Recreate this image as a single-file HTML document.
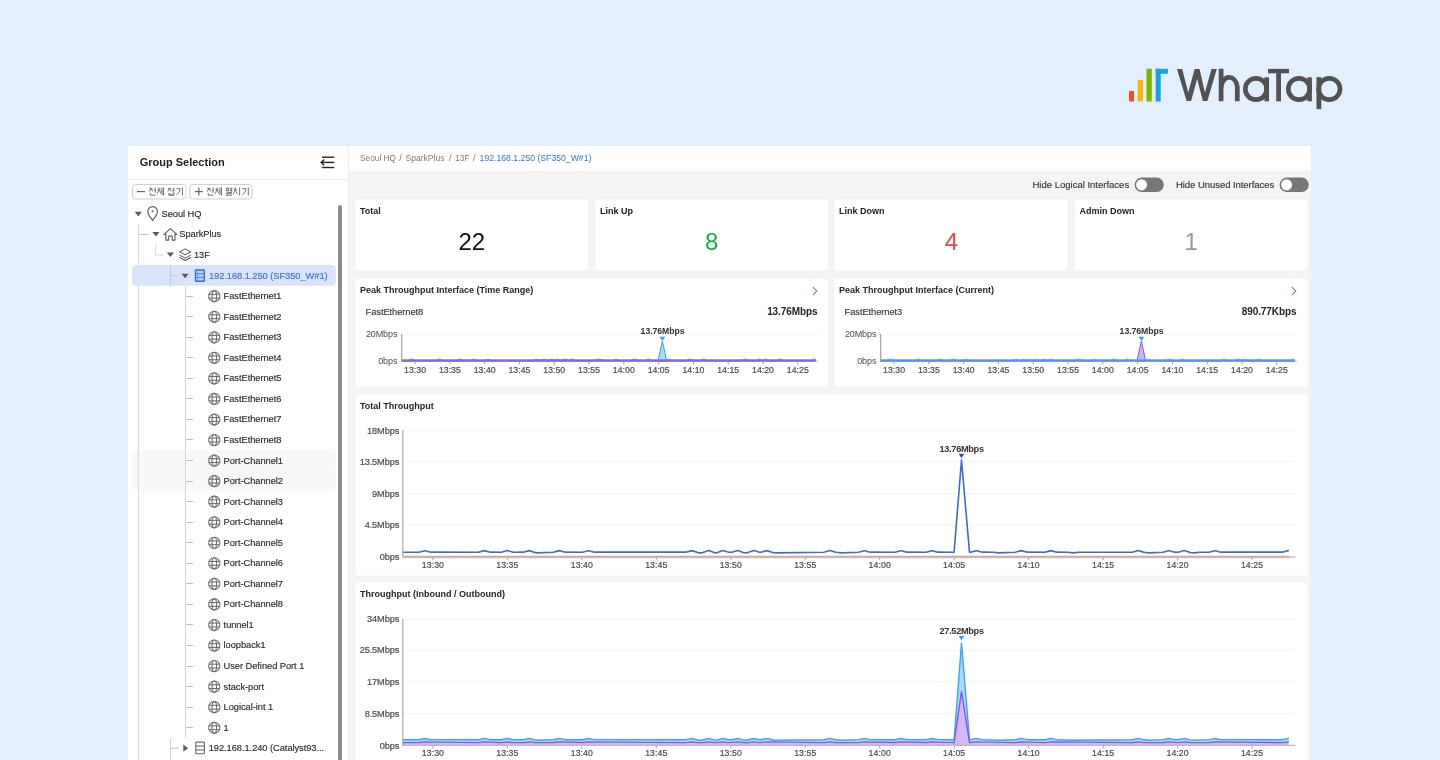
<!DOCTYPE html>
<html><head><meta charset="utf-8"><title>WhaTap NMS</title>
<style>
html,body{margin:0;padding:0;background:#e3effd;width:1440px;height:760px;overflow:hidden}
svg{display:block;will-change:transform}
text{font-family:'Liberation Sans', sans-serif}
</style></head><body>
<svg width="1440" height="760" viewBox="0 0 1440 760">
<rect width="1440" height="760" fill="#e3effd"/>
<g>
<rect x="1129" y="91" width="5" height="10.5" fill="#f04e23" rx="0"/>
<rect x="1137.7" y="80" width="5.2" height="21.5" fill="#ffb400" rx="0"/>
<rect x="1146.5" y="68.8" width="5.3" height="32.7" fill="#7ab800" rx="0"/>
<rect x="1155.7" y="68.8" width="5" height="32.7" fill="#1ba1e2" rx="0"/>
<rect x="1155.7" y="68.8" width="12.2" height="5" fill="#1ba1e2" rx="0"/>
<path d="M1177 68.9 L1186.6 100.9 L1191.1 100.9 L1197.15 78.9 L1202.9 100.9 L1207.4 100.9 L1216.8 68.9 L1211.5 68.9 L1204.9 92.4 L1199.6 68.9 L1194.7 68.9 L1188.2 92.4 L1182.2 68.9 Z" fill="#525252"/>
<path d="M1221.1 68.8 V101.3 M1221.1 89 A 8.1 10.7 0 0 1 1237.3 87 V101.3" fill="none" stroke="#525252" stroke-width="4.7"/>
<circle cx="1256" cy="89" r="10.7" fill="none" stroke="#525252" stroke-width="4.7"/>
<rect x="1264.4" y="77.3" width="4.6" height="24" fill="#525252" rx="0"/>
<rect x="1268" y="68.9" width="21" height="4.4" fill="#525252" rx="0"/>
<rect x="1276.2" y="68.9" width="4.8" height="32.4" fill="#525252" rx="0"/>
<circle cx="1299" cy="89" r="10.7" fill="none" stroke="#525252" stroke-width="4.7"/>
<rect x="1307.3" y="77.3" width="4.6" height="24" fill="#525252" rx="0"/>
<rect x="1316.5" y="77.1" width="4.8" height="32" fill="#525252" rx="0"/>
<circle cx="1329.3" cy="89" r="10.7" fill="none" stroke="#525252" stroke-width="4.7"/>
</g>
<rect x="128" y="146" width="220" height="614" fill="#ffffff" rx="0"/>
<line x1="128" y1="179.5" x2="348" y2="179.5" stroke="#efefef" stroke-width="1"/>
<line x1="348.5" y1="146" x2="348.5" y2="760" stroke="#ededed" stroke-width="1"/>
<text x="139.7" y="166" font-size="11" fill="#222" font-weight="700" text-anchor="start">Group Selection</text>
<g stroke="#222" stroke-width="1.4" fill="none"><line x1="322" y1="157.2" x2="334.2" y2="157.2"/><line x1="321" y1="162.4" x2="334.2" y2="162.4"/><line x1="322" y1="167.5" x2="334.2" y2="167.5"/><polyline points="324.2,159.6 321.2,162.4 324.2,165.2"/></g>
<rect x="132.5" y="184.5" width="53.5" height="14.5" rx="3" fill="#fff" stroke="#cfcfcf" stroke-width="1"/>
<rect x="189.5" y="184.5" width="62.5" height="14.5" rx="3" fill="#fff" stroke="#cfcfcf" stroke-width="1"/>
<line x1="137" y1="191.6" x2="145" y2="191.6" stroke="#666" stroke-width="1.2"/>
<line x1="194.8" y1="191.6" x2="202.9" y2="191.6" stroke="#666" stroke-width="1.2"/>
<line x1="198.85" y1="187.6" x2="198.85" y2="195.6" stroke="#666" stroke-width="1.2"/>
<path transform="translate(149.2,187.4)" d="M0.2 1 H3.4 M1.8 1 L0.1 4.3 M1.8 1 L3.6 4.1 M6.1 0 V5.4 M4.4 2.7 H6.1 M1.1 5.6 V7.8 H6.4" fill="none" stroke="#6e6e6e" stroke-width="0.95"/>
<path transform="translate(157.2,187.4)" d="M1.9 0 V1 M0.2 1.7 H3.5 M1.9 1.7 L0 6.4 M1.9 1.7 L3.7 6.2 M6.3 0 V8.2 M4.8 0.3 V7.6 M3.8 3.9 H4.8" fill="none" stroke="#6e6e6e" stroke-width="0.95"/>
<path transform="translate(167.7,187.4)" d="M0.2 1 H3.4 M1.8 1 L0.1 4.3 M1.8 1 L3.6 4.1 M6.1 0 V5.2 M4.4 2.6 H6.1 M1.2 5.4 V8 H6.1 V5.4 M1.2 6.7 H6.1" fill="none" stroke="#6e6e6e" stroke-width="0.95"/>
<path transform="translate(176.2,187.4)" d="M0.2 1.3 H3.9 Q3.7 5 0.5 7.3 M6.2 0 V8.2" fill="none" stroke="#6e6e6e" stroke-width="0.95"/>
<path transform="translate(207.1,187.4)" d="M0.2 1 H3.4 M1.8 1 L0.1 4.3 M1.8 1 L3.6 4.1 M6.1 0 V5.4 M4.4 2.7 H6.1 M1.1 5.6 V7.8 H6.4" fill="none" stroke="#6e6e6e" stroke-width="0.95"/>
<path transform="translate(215.2,187.4)" d="M1.9 0 V1 M0.2 1.7 H3.5 M1.9 1.7 L0 6.4 M1.9 1.7 L3.7 6.2 M6.3 0 V8.2 M4.8 0.3 V7.6 M3.8 3.9 H4.8" fill="none" stroke="#6e6e6e" stroke-width="0.95"/>
<path transform="translate(225.6,187.4)" d="M0.2 0.8 H3.9 M1.2 0.8 V3.4 M2.9 0.8 V3.4 M0.2 3.4 H3.9 M6.1 0 V4.8 M4.4 1.5 H6.1 M4.4 3 H6.1 M0.9 5 H6 V6.3 H0.9 V7.9 H6.3" fill="none" stroke="#6e6e6e" stroke-width="0.95"/>
<path transform="translate(233.4,187.4)" d="M1.9 0 V1 M0.2 1.7 H3.6 M1.9 1.7 L0 7 M1.9 1.7 L3.8 6.8 M6.2 0 V8.2" fill="none" stroke="#6e6e6e" stroke-width="0.95"/>
<path transform="translate(242.1,187.4)" d="M0.2 1.3 H3.9 Q3.7 5 0.5 7.3 M6.2 0 V8.2" fill="none" stroke="#6e6e6e" stroke-width="0.95"/>
<rect x="132.2" y="449.7" width="203.6" height="20.5" fill="#f8f8f8" rx="4"/>
<rect x="132.2" y="470.25000000000006" width="203.6" height="20.5" fill="#f8f8f8" rx="4"/>
<line x1="138.4" y1="224" x2="138.4" y2="760" stroke="#d6d6d6" stroke-width="1"/>
<rect x="132.2" y="265" width="203.6" height="20.7" fill="#d9e4fa" rx="4"/>
<line x1="138.9" y1="234.45000000000002" x2="148.4" y2="234.45000000000002" stroke="#c4c4c4" stroke-width="1"/>
<path d="M155.6 245 V255.0 H163" fill="none" stroke="#d6d6d6" stroke-width="1"/>
<line x1="170.5" y1="265" x2="170.5" y2="285.7" stroke="#c4cbd8" stroke-width="1"/>
<line x1="170.5" y1="275.55" x2="177.7" y2="275.55" stroke="#c4cbd8" stroke-width="1"/>
<line x1="185.5" y1="285.7" x2="185.5" y2="738" stroke="#d6d6d6" stroke-width="1"/>
<line x1="170.5" y1="738" x2="170.5" y2="760" stroke="#d6d6d6" stroke-width="1"/>
<path d="M134.70000000000002 211.7 H141.9 L138.3 216.3 Z" fill="#5a5a5a"/>
<path d="M152.6 220.4 C150.5 217.5 147.8 214.6 147.8 211.4 A4.8 4.8 0 0 1 157.4 211.4 C157.4 214.6 154.7 217.5 152.6 220.4 Z" fill="none" stroke="#5a5a5a" stroke-width="1.1"/>
<circle cx="152.6" cy="211.3" r="1" fill="#5a5a5a"/>
<text x="161.5" y="216.9" font-size="9.3" fill="#2c2c2c" font-weight="400" text-anchor="start" letter-spacing="-0.05" stroke="#2c2c2c" stroke-width="0.15">Seoul HQ</text>
<path d="M152.3 231.95000000000002 H159.5 L155.9 236.55000000000004 Z" fill="#5a5a5a"/>
<path d="M170.4 228.6 L164.1 234.4 H165.9 V240.1 H168.7 V236.1 H172.2 V240.1 H175 V234.4 H176.8 Z" fill="none" stroke="#5a5a5a" stroke-width="1.1" stroke-linejoin="round"/>
<text x="179.3" y="237.45000000000002" font-size="9.3" fill="#2c2c2c" font-weight="400" text-anchor="start" letter-spacing="-0.05" stroke="#2c2c2c" stroke-width="0.15">SparkPlus</text>
<path d="M166.8 252.5 H174.0 L170.4 257.1 Z" fill="#5a5a5a"/>
<g fill="none" stroke="#5a5a5a" stroke-width="1.05" stroke-linejoin="round"><path d="M179.6 251.9 L185.2 248.9 L190.8 251.9 L185.2 254.9 Z"/><path d="M179.6 255.1 L185.2 258.1 L190.8 255.1"/><path d="M179.6 257.5 L185.2 260.5 L190.8 257.5"/></g>
<text x="194" y="258.0" font-size="9.3" fill="#2c2c2c" font-weight="400" text-anchor="start" letter-spacing="-0.05" stroke="#2c2c2c" stroke-width="0.15">13F</text>
<path d="M181.5 273.75 H188.7 L185.1 278.35 Z" fill="#5a5a5a"/>
<rect x="194.8" y="269.3" width="10.2" height="12.6" rx="1" fill="#3a72dc"/>
<g fill="#b9d2fb"><rect x="196.20000000000002" y="270.8" width="7.4" height="2.6"/><rect x="196.20000000000002" y="274.3" width="7.4" height="2.6"/><rect x="196.20000000000002" y="277.8" width="7.4" height="2.6"/></g>
<g fill="#3a72dc"><circle cx="197.4" cy="272.1" r="0.5"/><circle cx="197.4" cy="275.6" r="0.5"/><circle cx="197.4" cy="279.1" r="0.5"/></g>
<text x="208.9" y="278.55" font-size="9.3" fill="#3a72dc" font-weight="400" text-anchor="start" letter-spacing="-0.05" stroke="#3a72dc" stroke-width="0.15">192.168.1.250 (SF350_W#1)</text>
<line x1="186" y1="296.5" x2="193" y2="296.5" stroke="#bdbdbd" stroke-width="1"/>
<g fill="none" stroke="#6c6c6c" stroke-width="1.05"><circle cx="214.3" cy="296.20000000000005" r="5.6"/><ellipse cx="214.3" cy="296.20000000000005" rx="2.3" ry="5.6"/><line x1="208.70000000000002" y1="294.30000000000007" x2="219.9" y2="294.30000000000007"/><line x1="208.70000000000002" y1="298.1" x2="219.9" y2="298.1"/></g>
<text x="223.6" y="299.1" font-size="9.3" fill="#2c2c2c" font-weight="400" text-anchor="start" letter-spacing="-0.05" stroke="#2c2c2c" stroke-width="0.15">FastEthernet1</text>
<line x1="186" y1="316.5" x2="193" y2="316.5" stroke="#bdbdbd" stroke-width="1"/>
<g fill="none" stroke="#6c6c6c" stroke-width="1.05"><circle cx="214.3" cy="316.75" r="5.6"/><ellipse cx="214.3" cy="316.75" rx="2.3" ry="5.6"/><line x1="208.70000000000002" y1="314.85" x2="219.9" y2="314.85"/><line x1="208.70000000000002" y1="318.65" x2="219.9" y2="318.65"/></g>
<text x="223.6" y="319.65" font-size="9.3" fill="#2c2c2c" font-weight="400" text-anchor="start" letter-spacing="-0.05" stroke="#2c2c2c" stroke-width="0.15">FastEthernet2</text>
<line x1="186" y1="337.5" x2="193" y2="337.5" stroke="#bdbdbd" stroke-width="1"/>
<g fill="none" stroke="#6c6c6c" stroke-width="1.05"><circle cx="214.3" cy="337.30000000000007" r="5.6"/><ellipse cx="214.3" cy="337.30000000000007" rx="2.3" ry="5.6"/><line x1="208.70000000000002" y1="335.4000000000001" x2="219.9" y2="335.4000000000001"/><line x1="208.70000000000002" y1="339.20000000000005" x2="219.9" y2="339.20000000000005"/></g>
<text x="223.6" y="340.20000000000005" font-size="9.3" fill="#2c2c2c" font-weight="400" text-anchor="start" letter-spacing="-0.05" stroke="#2c2c2c" stroke-width="0.15">FastEthernet3</text>
<line x1="186" y1="357.5" x2="193" y2="357.5" stroke="#bdbdbd" stroke-width="1"/>
<g fill="none" stroke="#6c6c6c" stroke-width="1.05"><circle cx="214.3" cy="357.85" r="5.6"/><ellipse cx="214.3" cy="357.85" rx="2.3" ry="5.6"/><line x1="208.70000000000002" y1="355.95000000000005" x2="219.9" y2="355.95000000000005"/><line x1="208.70000000000002" y1="359.75" x2="219.9" y2="359.75"/></g>
<text x="223.6" y="360.75" font-size="9.3" fill="#2c2c2c" font-weight="400" text-anchor="start" letter-spacing="-0.05" stroke="#2c2c2c" stroke-width="0.15">FastEthernet4</text>
<line x1="186" y1="378.5" x2="193" y2="378.5" stroke="#bdbdbd" stroke-width="1"/>
<g fill="none" stroke="#6c6c6c" stroke-width="1.05"><circle cx="214.3" cy="378.40000000000003" r="5.6"/><ellipse cx="214.3" cy="378.40000000000003" rx="2.3" ry="5.6"/><line x1="208.70000000000002" y1="376.50000000000006" x2="219.9" y2="376.50000000000006"/><line x1="208.70000000000002" y1="380.3" x2="219.9" y2="380.3"/></g>
<text x="223.6" y="381.3" font-size="9.3" fill="#2c2c2c" font-weight="400" text-anchor="start" letter-spacing="-0.05" stroke="#2c2c2c" stroke-width="0.15">FastEthernet5</text>
<line x1="186" y1="398.5" x2="193" y2="398.5" stroke="#bdbdbd" stroke-width="1"/>
<g fill="none" stroke="#6c6c6c" stroke-width="1.05"><circle cx="214.3" cy="398.95000000000005" r="5.6"/><ellipse cx="214.3" cy="398.95000000000005" rx="2.3" ry="5.6"/><line x1="208.70000000000002" y1="397.05000000000007" x2="219.9" y2="397.05000000000007"/><line x1="208.70000000000002" y1="400.85" x2="219.9" y2="400.85"/></g>
<text x="223.6" y="401.85" font-size="9.3" fill="#2c2c2c" font-weight="400" text-anchor="start" letter-spacing="-0.05" stroke="#2c2c2c" stroke-width="0.15">FastEthernet6</text>
<line x1="186" y1="419.5" x2="193" y2="419.5" stroke="#bdbdbd" stroke-width="1"/>
<g fill="none" stroke="#6c6c6c" stroke-width="1.05"><circle cx="214.3" cy="419.5" r="5.6"/><ellipse cx="214.3" cy="419.5" rx="2.3" ry="5.6"/><line x1="208.70000000000002" y1="417.6" x2="219.9" y2="417.6"/><line x1="208.70000000000002" y1="421.4" x2="219.9" y2="421.4"/></g>
<text x="223.6" y="422.4" font-size="9.3" fill="#2c2c2c" font-weight="400" text-anchor="start" letter-spacing="-0.05" stroke="#2c2c2c" stroke-width="0.15">FastEthernet7</text>
<line x1="186" y1="439.5" x2="193" y2="439.5" stroke="#bdbdbd" stroke-width="1"/>
<g fill="none" stroke="#6c6c6c" stroke-width="1.05"><circle cx="214.3" cy="440.05000000000007" r="5.6"/><ellipse cx="214.3" cy="440.05000000000007" rx="2.3" ry="5.6"/><line x1="208.70000000000002" y1="438.1500000000001" x2="219.9" y2="438.1500000000001"/><line x1="208.70000000000002" y1="441.95000000000005" x2="219.9" y2="441.95000000000005"/></g>
<text x="223.6" y="442.95000000000005" font-size="9.3" fill="#2c2c2c" font-weight="400" text-anchor="start" letter-spacing="-0.05" stroke="#2c2c2c" stroke-width="0.15">FastEthernet8</text>
<line x1="186" y1="460.5" x2="193" y2="460.5" stroke="#bdbdbd" stroke-width="1"/>
<g fill="none" stroke="#6c6c6c" stroke-width="1.05"><circle cx="214.3" cy="460.6" r="5.6"/><ellipse cx="214.3" cy="460.6" rx="2.3" ry="5.6"/><line x1="208.70000000000002" y1="458.70000000000005" x2="219.9" y2="458.70000000000005"/><line x1="208.70000000000002" y1="462.5" x2="219.9" y2="462.5"/></g>
<text x="223.6" y="463.5" font-size="9.3" fill="#2c2c2c" font-weight="400" text-anchor="start" letter-spacing="-0.05" stroke="#2c2c2c" stroke-width="0.15">Port-Channel1</text>
<line x1="186" y1="481.5" x2="193" y2="481.5" stroke="#bdbdbd" stroke-width="1"/>
<g fill="none" stroke="#6c6c6c" stroke-width="1.05"><circle cx="214.3" cy="481.1500000000001" r="5.6"/><ellipse cx="214.3" cy="481.1500000000001" rx="2.3" ry="5.6"/><line x1="208.70000000000002" y1="479.2500000000001" x2="219.9" y2="479.2500000000001"/><line x1="208.70000000000002" y1="483.05000000000007" x2="219.9" y2="483.05000000000007"/></g>
<text x="223.6" y="484.05000000000007" font-size="9.3" fill="#2c2c2c" font-weight="400" text-anchor="start" letter-spacing="-0.05" stroke="#2c2c2c" stroke-width="0.15">Port-Channel2</text>
<line x1="186" y1="501.5" x2="193" y2="501.5" stroke="#bdbdbd" stroke-width="1"/>
<g fill="none" stroke="#6c6c6c" stroke-width="1.05"><circle cx="214.3" cy="501.70000000000005" r="5.6"/><ellipse cx="214.3" cy="501.70000000000005" rx="2.3" ry="5.6"/><line x1="208.70000000000002" y1="499.80000000000007" x2="219.9" y2="499.80000000000007"/><line x1="208.70000000000002" y1="503.6" x2="219.9" y2="503.6"/></g>
<text x="223.6" y="504.6" font-size="9.3" fill="#2c2c2c" font-weight="400" text-anchor="start" letter-spacing="-0.05" stroke="#2c2c2c" stroke-width="0.15">Port-Channel3</text>
<line x1="186" y1="522.5" x2="193" y2="522.5" stroke="#bdbdbd" stroke-width="1"/>
<g fill="none" stroke="#6c6c6c" stroke-width="1.05"><circle cx="214.3" cy="522.25" r="5.6"/><ellipse cx="214.3" cy="522.25" rx="2.3" ry="5.6"/><line x1="208.70000000000002" y1="520.35" x2="219.9" y2="520.35"/><line x1="208.70000000000002" y1="524.15" x2="219.9" y2="524.15"/></g>
<text x="223.6" y="525.15" font-size="9.3" fill="#2c2c2c" font-weight="400" text-anchor="start" letter-spacing="-0.05" stroke="#2c2c2c" stroke-width="0.15">Port-Channel4</text>
<line x1="186" y1="542.5" x2="193" y2="542.5" stroke="#bdbdbd" stroke-width="1"/>
<g fill="none" stroke="#6c6c6c" stroke-width="1.05"><circle cx="214.3" cy="542.8000000000001" r="5.6"/><ellipse cx="214.3" cy="542.8000000000001" rx="2.3" ry="5.6"/><line x1="208.70000000000002" y1="540.9000000000001" x2="219.9" y2="540.9000000000001"/><line x1="208.70000000000002" y1="544.7" x2="219.9" y2="544.7"/></g>
<text x="223.6" y="545.7" font-size="9.3" fill="#2c2c2c" font-weight="400" text-anchor="start" letter-spacing="-0.05" stroke="#2c2c2c" stroke-width="0.15">Port-Channel5</text>
<line x1="186" y1="563.5" x2="193" y2="563.5" stroke="#bdbdbd" stroke-width="1"/>
<g fill="none" stroke="#6c6c6c" stroke-width="1.05"><circle cx="214.3" cy="563.35" r="5.6"/><ellipse cx="214.3" cy="563.35" rx="2.3" ry="5.6"/><line x1="208.70000000000002" y1="561.45" x2="219.9" y2="561.45"/><line x1="208.70000000000002" y1="565.25" x2="219.9" y2="565.25"/></g>
<text x="223.6" y="566.25" font-size="9.3" fill="#2c2c2c" font-weight="400" text-anchor="start" letter-spacing="-0.05" stroke="#2c2c2c" stroke-width="0.15">Port-Channel6</text>
<line x1="186" y1="583.5" x2="193" y2="583.5" stroke="#bdbdbd" stroke-width="1"/>
<g fill="none" stroke="#6c6c6c" stroke-width="1.05"><circle cx="214.3" cy="583.9000000000001" r="5.6"/><ellipse cx="214.3" cy="583.9000000000001" rx="2.3" ry="5.6"/><line x1="208.70000000000002" y1="582.0000000000001" x2="219.9" y2="582.0000000000001"/><line x1="208.70000000000002" y1="585.8000000000001" x2="219.9" y2="585.8000000000001"/></g>
<text x="223.6" y="586.8000000000001" font-size="9.3" fill="#2c2c2c" font-weight="400" text-anchor="start" letter-spacing="-0.05" stroke="#2c2c2c" stroke-width="0.15">Port-Channel7</text>
<line x1="186" y1="604.5" x2="193" y2="604.5" stroke="#bdbdbd" stroke-width="1"/>
<g fill="none" stroke="#6c6c6c" stroke-width="1.05"><circle cx="214.3" cy="604.45" r="5.6"/><ellipse cx="214.3" cy="604.45" rx="2.3" ry="5.6"/><line x1="208.70000000000002" y1="602.5500000000001" x2="219.9" y2="602.5500000000001"/><line x1="208.70000000000002" y1="606.35" x2="219.9" y2="606.35"/></g>
<text x="223.6" y="607.35" font-size="9.3" fill="#2c2c2c" font-weight="400" text-anchor="start" letter-spacing="-0.05" stroke="#2c2c2c" stroke-width="0.15">Port-Channel8</text>
<line x1="186" y1="624.5" x2="193" y2="624.5" stroke="#bdbdbd" stroke-width="1"/>
<g fill="none" stroke="#6c6c6c" stroke-width="1.05"><circle cx="214.3" cy="625.0" r="5.6"/><ellipse cx="214.3" cy="625.0" rx="2.3" ry="5.6"/><line x1="208.70000000000002" y1="623.1" x2="219.9" y2="623.1"/><line x1="208.70000000000002" y1="626.9" x2="219.9" y2="626.9"/></g>
<text x="223.6" y="627.9" font-size="9.3" fill="#2c2c2c" font-weight="400" text-anchor="start" letter-spacing="-0.05" stroke="#2c2c2c" stroke-width="0.15">tunnel1</text>
<line x1="186" y1="645.5" x2="193" y2="645.5" stroke="#bdbdbd" stroke-width="1"/>
<g fill="none" stroke="#6c6c6c" stroke-width="1.05"><circle cx="214.3" cy="645.5500000000001" r="5.6"/><ellipse cx="214.3" cy="645.5500000000001" rx="2.3" ry="5.6"/><line x1="208.70000000000002" y1="643.6500000000001" x2="219.9" y2="643.6500000000001"/><line x1="208.70000000000002" y1="647.45" x2="219.9" y2="647.45"/></g>
<text x="223.6" y="648.45" font-size="9.3" fill="#2c2c2c" font-weight="400" text-anchor="start" letter-spacing="-0.05" stroke="#2c2c2c" stroke-width="0.15">loopback1</text>
<line x1="186" y1="666.5" x2="193" y2="666.5" stroke="#bdbdbd" stroke-width="1"/>
<g fill="none" stroke="#6c6c6c" stroke-width="1.05"><circle cx="214.3" cy="666.1" r="5.6"/><ellipse cx="214.3" cy="666.1" rx="2.3" ry="5.6"/><line x1="208.70000000000002" y1="664.2" x2="219.9" y2="664.2"/><line x1="208.70000000000002" y1="668.0" x2="219.9" y2="668.0"/></g>
<text x="223.6" y="669.0" font-size="9.3" fill="#2c2c2c" font-weight="400" text-anchor="start" letter-spacing="-0.05" stroke="#2c2c2c" stroke-width="0.15">User Defined Port 1</text>
<line x1="186" y1="686.5" x2="193" y2="686.5" stroke="#bdbdbd" stroke-width="1"/>
<g fill="none" stroke="#6c6c6c" stroke-width="1.05"><circle cx="214.3" cy="686.6500000000001" r="5.6"/><ellipse cx="214.3" cy="686.6500000000001" rx="2.3" ry="5.6"/><line x1="208.70000000000002" y1="684.7500000000001" x2="219.9" y2="684.7500000000001"/><line x1="208.70000000000002" y1="688.5500000000001" x2="219.9" y2="688.5500000000001"/></g>
<text x="223.6" y="689.5500000000001" font-size="9.3" fill="#2c2c2c" font-weight="400" text-anchor="start" letter-spacing="-0.05" stroke="#2c2c2c" stroke-width="0.15">stack-port</text>
<line x1="186" y1="707.5" x2="193" y2="707.5" stroke="#bdbdbd" stroke-width="1"/>
<g fill="none" stroke="#6c6c6c" stroke-width="1.05"><circle cx="214.3" cy="707.2" r="5.6"/><ellipse cx="214.3" cy="707.2" rx="2.3" ry="5.6"/><line x1="208.70000000000002" y1="705.3000000000001" x2="219.9" y2="705.3000000000001"/><line x1="208.70000000000002" y1="709.1" x2="219.9" y2="709.1"/></g>
<text x="223.6" y="710.1" font-size="9.3" fill="#2c2c2c" font-weight="400" text-anchor="start" letter-spacing="-0.05" stroke="#2c2c2c" stroke-width="0.15">Logical-int 1</text>
<line x1="186" y1="727.5" x2="193" y2="727.5" stroke="#bdbdbd" stroke-width="1"/>
<g fill="none" stroke="#6c6c6c" stroke-width="1.05"><circle cx="214.3" cy="727.75" r="5.6"/><ellipse cx="214.3" cy="727.75" rx="2.3" ry="5.6"/><line x1="208.70000000000002" y1="725.85" x2="219.9" y2="725.85"/><line x1="208.70000000000002" y1="729.65" x2="219.9" y2="729.65"/></g>
<text x="223.6" y="730.65" font-size="9.3" fill="#2c2c2c" font-weight="400" text-anchor="start" letter-spacing="-0.05" stroke="#2c2c2c" stroke-width="0.15">1</text>
<line x1="171" y1="748.2" x2="178" y2="748.2" stroke="#bdbdbd" stroke-width="1"/>
<path d="M183.29999999999998 744.6 V751.8000000000001 L188.1 748.2 Z" fill="#5a5a5a"/>
<g fill="none" stroke="#6a6a6a" stroke-width="1.1"><rect x="195.8" y="742.1" width="8.6" height="11.6" rx="0.5"/><line x1="195.8" y1="746.0" x2="204.4" y2="746.0"/><line x1="195.8" y1="749.9000000000001" x2="204.4" y2="749.9000000000001"/></g>
<text x="208.7" y="751.2" font-size="9.3" fill="#2c2c2c" font-weight="400" text-anchor="start" letter-spacing="-0.05" stroke="#2c2c2c" stroke-width="0.15">192.168.1.240 (Catalyst93...</text>
<rect x="338" y="205" width="4" height="600" fill="#8a8a8a" rx="2"/>
<rect x="349" y="146" width="962" height="614" fill="#f4f4f4" rx="0"/>
<rect x="349" y="146" width="962" height="25" fill="#ffffff" rx="0"/>
<text x="360" y="161" font-size="9" fill="#7a7a7a" font-weight="400" text-anchor="start" textLength="36" lengthAdjust="spacingAndGlyphs">Seoul HQ</text>
<text x="400.5" y="161" font-size="9" fill="#7a7a7a" font-weight="400" text-anchor="middle">/</text>
<text x="405.4" y="161" font-size="9" fill="#7a7a7a" font-weight="400" text-anchor="start" textLength="39.2" lengthAdjust="spacingAndGlyphs">SparkPlus</text>
<text x="450.2" y="161" font-size="9" fill="#7a7a7a" font-weight="400" text-anchor="middle">/</text>
<text x="455.1" y="161" font-size="9" fill="#7a7a7a" font-weight="400" text-anchor="start" textLength="14.3" lengthAdjust="spacingAndGlyphs">13F</text>
<text x="474.3" y="161" font-size="9" fill="#7a7a7a" font-weight="400" text-anchor="middle">/</text>
<text x="479.6" y="161" font-size="9" fill="#3a72dc" font-weight="400" text-anchor="start" textLength="111.8" lengthAdjust="spacingAndGlyphs">192.168.1.250 (SF350_W#1)</text>
<text x="1032.5" y="188.4" font-size="9.5" fill="#363636" font-weight="400" text-anchor="start" stroke="#363636" stroke-width="0.15">Hide Logical Interfaces</text>
<text x="1176" y="188.4" font-size="9.5" fill="#363636" font-weight="400" text-anchor="start" letter-spacing="-0.05" stroke="#363636" stroke-width="0.15">Hide Unused Interfaces</text>
<rect x="1134.6" y="177.6" width="29.2" height="14.4" rx="7.2" fill="#777"/>
<circle cx="1141.6" cy="184.85" r="5.8" fill="#fff" stroke="#5e5e5e" stroke-width="0.5"/>
<rect x="1279.6" y="177.6" width="29.2" height="14.4" rx="7.2" fill="#777"/>
<circle cx="1286.6" cy="184.85" r="5.8" fill="#fff" stroke="#5e5e5e" stroke-width="0.5"/>
<rect x="355" y="199" width="233.5" height="72" rx="3" fill="#ffffff" stroke="#ececec" stroke-width="0.5"/>
<text x="360" y="214" font-size="9" fill="#222" font-weight="700" text-anchor="start">Total</text>
<text x="471.8" y="250" font-size="24" fill="#111" font-weight="400" text-anchor="middle">22</text>
<rect x="595" y="199" width="233.5" height="72" rx="3" fill="#ffffff" stroke="#ececec" stroke-width="0.5"/>
<text x="600" y="214" font-size="9" fill="#222" font-weight="700" text-anchor="start">Link Up</text>
<text x="711.8" y="250" font-size="24" fill="#1aab4b" font-weight="400" text-anchor="middle">8</text>
<rect x="834" y="199" width="234" height="72" rx="3" fill="#ffffff" stroke="#ececec" stroke-width="0.5"/>
<text x="839" y="214" font-size="9" fill="#222" font-weight="700" text-anchor="start">Link Down</text>
<text x="951.5" y="250" font-size="24" fill="#e5474b" font-weight="400" text-anchor="middle">4</text>
<rect x="1074.5" y="199" width="233.5" height="72" rx="3" fill="#ffffff" stroke="#ececec" stroke-width="0.5"/>
<text x="1079.5" y="214" font-size="9" fill="#222" font-weight="700" text-anchor="start">Admin Down</text>
<text x="1191.3" y="250" font-size="24" fill="#9a9a9a" font-weight="400" text-anchor="middle">1</text>
<rect x="355" y="278" width="473.5" height="109" rx="3" fill="#ffffff" stroke="#ececec" stroke-width="0.5"/>
<text x="360" y="293.2" font-size="9" fill="#262626" font-weight="700" text-anchor="start">Peak Throughput Interface (Time Range)</text>
<path d="M812.8 287 L816.8 291 L812.8 295" fill="none" stroke="#3f6fd6" stroke-width="1.05"/>
<text x="365.6" y="314.6" font-size="9.4" fill="#3a3a3a" font-weight="400" text-anchor="start" letter-spacing="-0.1" stroke="#3a3a3a" stroke-width="0.15">FastEthernet8</text>
<text x="817.4" y="315" font-size="10" fill="#262626" font-weight="700" text-anchor="end" letter-spacing="-0.1">13.76Mbps</text>
<line x1="401.2" y1="334.1" x2="817.8" y2="334.1" stroke="#f3f3f3" stroke-width="1"/>
<text x="397.3" y="337.2" font-size="9" fill="#4c4c4c" font-weight="400" text-anchor="end" letter-spacing="-0.1">20Mbps</text>
<text x="397.3" y="364.2" font-size="9" fill="#4c4c4c" font-weight="400" text-anchor="end" letter-spacing="-0.1">0bps</text>
<line x1="401.2" y1="361.1" x2="817.8" y2="361.1" stroke="#b5b5b5" stroke-width="1"/>
<line x1="415.1" y1="361" x2="415.1" y2="364.5" stroke="#a8a8a8" stroke-width="1"/>
<text x="415.1" y="372.5" font-size="8.7" fill="#4c4c4c" font-weight="400" text-anchor="middle" letter-spacing="0.05" stroke="#4c4c4c" stroke-width="0.2">13:30</text>
<line x1="449.89000000000004" y1="361" x2="449.89000000000004" y2="364.5" stroke="#a8a8a8" stroke-width="1"/>
<text x="449.89000000000004" y="372.5" font-size="8.7" fill="#4c4c4c" font-weight="400" text-anchor="middle" letter-spacing="0.05" stroke="#4c4c4c" stroke-width="0.2">13:35</text>
<line x1="484.68" y1="361" x2="484.68" y2="364.5" stroke="#a8a8a8" stroke-width="1"/>
<text x="484.68" y="372.5" font-size="8.7" fill="#4c4c4c" font-weight="400" text-anchor="middle" letter-spacing="0.05" stroke="#4c4c4c" stroke-width="0.2">13:40</text>
<line x1="519.47" y1="361" x2="519.47" y2="364.5" stroke="#a8a8a8" stroke-width="1"/>
<text x="519.47" y="372.5" font-size="8.7" fill="#4c4c4c" font-weight="400" text-anchor="middle" letter-spacing="0.05" stroke="#4c4c4c" stroke-width="0.2">13:45</text>
<line x1="554.26" y1="361" x2="554.26" y2="364.5" stroke="#a8a8a8" stroke-width="1"/>
<text x="554.26" y="372.5" font-size="8.7" fill="#4c4c4c" font-weight="400" text-anchor="middle" letter-spacing="0.05" stroke="#4c4c4c" stroke-width="0.2">13:50</text>
<line x1="589.05" y1="361" x2="589.05" y2="364.5" stroke="#a8a8a8" stroke-width="1"/>
<text x="589.05" y="372.5" font-size="8.7" fill="#4c4c4c" font-weight="400" text-anchor="middle" letter-spacing="0.05" stroke="#4c4c4c" stroke-width="0.2">13:55</text>
<line x1="623.84" y1="361" x2="623.84" y2="364.5" stroke="#a8a8a8" stroke-width="1"/>
<text x="623.84" y="372.5" font-size="8.7" fill="#4c4c4c" font-weight="400" text-anchor="middle" letter-spacing="0.05" stroke="#4c4c4c" stroke-width="0.2">14:00</text>
<line x1="658.63" y1="361" x2="658.63" y2="364.5" stroke="#a8a8a8" stroke-width="1"/>
<text x="658.63" y="372.5" font-size="8.7" fill="#4c4c4c" font-weight="400" text-anchor="middle" letter-spacing="0.05" stroke="#4c4c4c" stroke-width="0.2">14:05</text>
<line x1="693.4200000000001" y1="361" x2="693.4200000000001" y2="364.5" stroke="#a8a8a8" stroke-width="1"/>
<text x="693.4200000000001" y="372.5" font-size="8.7" fill="#4c4c4c" font-weight="400" text-anchor="middle" letter-spacing="0.05" stroke="#4c4c4c" stroke-width="0.2">14:10</text>
<line x1="728.21" y1="361" x2="728.21" y2="364.5" stroke="#a8a8a8" stroke-width="1"/>
<text x="728.21" y="372.5" font-size="8.7" fill="#4c4c4c" font-weight="400" text-anchor="middle" letter-spacing="0.05" stroke="#4c4c4c" stroke-width="0.2">14:15</text>
<line x1="763.0" y1="361" x2="763.0" y2="364.5" stroke="#a8a8a8" stroke-width="1"/>
<text x="763.0" y="372.5" font-size="8.7" fill="#4c4c4c" font-weight="400" text-anchor="middle" letter-spacing="0.05" stroke="#4c4c4c" stroke-width="0.2">14:20</text>
<line x1="797.79" y1="361" x2="797.79" y2="364.5" stroke="#a8a8a8" stroke-width="1"/>
<text x="797.79" y="372.5" font-size="8.7" fill="#4c4c4c" font-weight="400" text-anchor="middle" letter-spacing="0.05" stroke="#4c4c4c" stroke-width="0.2">14:25</text>
<path d="M658.0 360.8 L662.4 341 L666.6 360.8 Z" fill="#a9dcfb" stroke="#35a0f0" stroke-width="1"/>
<path d="M401.2 360.60 L407.7 360.58 L411.7 359.62 L415.7 360.60 L435.2 360.60 L439.2 359.65 L443.2 360.55 L456.2 360.60 L460.2 359.65 L464.2 360.55 L470.2 360.58 L474.2 359.62 L478.2 360.60 L484.2 360.55 L487.7 359.68 L488.2 359.65 L492.2 360.60 L533.7 360.55 L537.2 359.68 L537.7 359.65 L540.7 360.40 L541.2 360.40 L544.2 359.65 L547.7 360.43 L551.2 359.65 L554.2 360.30 L554.7 360.30 L557.2 359.68 L557.7 359.65 L561.2 360.53 L565.2 359.62 L568.7 360.45 L572.2 359.60 L576.2 360.60 L594.2 360.60 L598.2 359.62 L599.2 359.83 L600.2 359.65 L604.2 360.55 L611.7 360.60 L615.7 359.68 L616.2 359.65 L620.2 360.60 L630.2 360.60 L634.2 359.62 L638.2 360.58 L644.2 360.60 L648.2 359.60 L652.2 360.60 L665.2 360.55 L668.7 359.68 L669.2 359.65 L673.2 360.60 L685.7 360.60 L689.7 359.62 L693.7 360.58 L699.7 360.60 L703.7 359.60 L707.7 360.60 L741.2 360.60 L745.2 359.65 L749.2 360.55 L755.2 360.60 L759.2 359.62 L762.7 360.45 L766.2 359.60 L770.2 360.60 L776.2 360.58 L780.2 359.62 L784.2 360.60 L810.7 360.60 L814.7 359.62 L815.7 359.83" fill="none" stroke="#5aa5f5" stroke-width="2"/>
<path d="M401.2 360.7 H815.8" fill="none" stroke="#8a63e6" stroke-width="2.2"/>
<line x1="401.7" y1="334" x2="401.7" y2="362" stroke="#a0a0a0" stroke-width="1.2"/>
<path d="M659.5 336.8 H665.3 L662.4 341 Z" fill="#35a0f0"/>
<text x="662.6" y="333.8" font-size="8.7" fill="#333" font-weight="700" text-anchor="middle" letter-spacing="-0.05">13.76Mbps</text>
<rect x="834" y="278" width="474" height="109" rx="3" fill="#ffffff" stroke="#ececec" stroke-width="0.5"/>
<text x="839" y="293.2" font-size="9" fill="#262626" font-weight="700" text-anchor="start">Peak Throughput Interface (Current)</text>
<path d="M1291.8 287 L1295.8 291 L1291.8 295" fill="none" stroke="#3f6fd6" stroke-width="1.05"/>
<text x="844.6" y="314.6" font-size="9.4" fill="#3a3a3a" font-weight="400" text-anchor="start" letter-spacing="-0.1" stroke="#3a3a3a" stroke-width="0.15">FastEthernet3</text>
<text x="1296.4" y="315" font-size="10" fill="#262626" font-weight="700" text-anchor="end" letter-spacing="-0.1">890.77Kbps</text>
<line x1="880.2" y1="334.1" x2="1296.8" y2="334.1" stroke="#f3f3f3" stroke-width="1"/>
<text x="876.3" y="337.2" font-size="9" fill="#4c4c4c" font-weight="400" text-anchor="end" letter-spacing="-0.1">20Mbps</text>
<text x="876.3" y="364.2" font-size="9" fill="#4c4c4c" font-weight="400" text-anchor="end" letter-spacing="-0.1">0bps</text>
<line x1="880.2" y1="361.1" x2="1296.8" y2="361.1" stroke="#b5b5b5" stroke-width="1"/>
<line x1="894.1" y1="361" x2="894.1" y2="364.5" stroke="#a8a8a8" stroke-width="1"/>
<text x="894.1" y="372.5" font-size="8.7" fill="#4c4c4c" font-weight="400" text-anchor="middle" letter-spacing="0.05" stroke="#4c4c4c" stroke-width="0.2">13:30</text>
<line x1="928.89" y1="361" x2="928.89" y2="364.5" stroke="#a8a8a8" stroke-width="1"/>
<text x="928.89" y="372.5" font-size="8.7" fill="#4c4c4c" font-weight="400" text-anchor="middle" letter-spacing="0.05" stroke="#4c4c4c" stroke-width="0.2">13:35</text>
<line x1="963.6800000000001" y1="361" x2="963.6800000000001" y2="364.5" stroke="#a8a8a8" stroke-width="1"/>
<text x="963.6800000000001" y="372.5" font-size="8.7" fill="#4c4c4c" font-weight="400" text-anchor="middle" letter-spacing="0.05" stroke="#4c4c4c" stroke-width="0.2">13:40</text>
<line x1="998.47" y1="361" x2="998.47" y2="364.5" stroke="#a8a8a8" stroke-width="1"/>
<text x="998.47" y="372.5" font-size="8.7" fill="#4c4c4c" font-weight="400" text-anchor="middle" letter-spacing="0.05" stroke="#4c4c4c" stroke-width="0.2">13:45</text>
<line x1="1033.26" y1="361" x2="1033.26" y2="364.5" stroke="#a8a8a8" stroke-width="1"/>
<text x="1033.26" y="372.5" font-size="8.7" fill="#4c4c4c" font-weight="400" text-anchor="middle" letter-spacing="0.05" stroke="#4c4c4c" stroke-width="0.2">13:50</text>
<line x1="1068.05" y1="361" x2="1068.05" y2="364.5" stroke="#a8a8a8" stroke-width="1"/>
<text x="1068.05" y="372.5" font-size="8.7" fill="#4c4c4c" font-weight="400" text-anchor="middle" letter-spacing="0.05" stroke="#4c4c4c" stroke-width="0.2">13:55</text>
<line x1="1102.8400000000001" y1="361" x2="1102.8400000000001" y2="364.5" stroke="#a8a8a8" stroke-width="1"/>
<text x="1102.8400000000001" y="372.5" font-size="8.7" fill="#4c4c4c" font-weight="400" text-anchor="middle" letter-spacing="0.05" stroke="#4c4c4c" stroke-width="0.2">14:00</text>
<line x1="1137.63" y1="361" x2="1137.63" y2="364.5" stroke="#a8a8a8" stroke-width="1"/>
<text x="1137.63" y="372.5" font-size="8.7" fill="#4c4c4c" font-weight="400" text-anchor="middle" letter-spacing="0.05" stroke="#4c4c4c" stroke-width="0.2">14:05</text>
<line x1="1172.42" y1="361" x2="1172.42" y2="364.5" stroke="#a8a8a8" stroke-width="1"/>
<text x="1172.42" y="372.5" font-size="8.7" fill="#4c4c4c" font-weight="400" text-anchor="middle" letter-spacing="0.05" stroke="#4c4c4c" stroke-width="0.2">14:10</text>
<line x1="1207.21" y1="361" x2="1207.21" y2="364.5" stroke="#a8a8a8" stroke-width="1"/>
<text x="1207.21" y="372.5" font-size="8.7" fill="#4c4c4c" font-weight="400" text-anchor="middle" letter-spacing="0.05" stroke="#4c4c4c" stroke-width="0.2">14:15</text>
<line x1="1242.0" y1="361" x2="1242.0" y2="364.5" stroke="#a8a8a8" stroke-width="1"/>
<text x="1242.0" y="372.5" font-size="8.7" fill="#4c4c4c" font-weight="400" text-anchor="middle" letter-spacing="0.05" stroke="#4c4c4c" stroke-width="0.2">14:20</text>
<line x1="1276.79" y1="361" x2="1276.79" y2="364.5" stroke="#a8a8a8" stroke-width="1"/>
<text x="1276.79" y="372.5" font-size="8.7" fill="#4c4c4c" font-weight="400" text-anchor="middle" letter-spacing="0.05" stroke="#4c4c4c" stroke-width="0.2">14:25</text>
<path d="M1137.0 360.8 L1141.4 341 L1145.6000000000001 360.8 Z" fill="#cfb6f7" stroke="#8a5be6" stroke-width="1"/>
<path d="M880.2 360.60 L886.7 360.58 L890.7 359.62 L894.7 360.60 L914.2 360.60 L918.2 359.65 L922.2 360.55 L935.2 360.60 L939.2 359.65 L943.2 360.55 L949.2 360.58 L953.2 359.62 L957.2 360.60 L963.2 360.55 L966.7 359.68 L967.2 359.65 L971.2 360.60 L1012.7 360.55 L1016.2 359.68 L1016.7 359.65 L1019.7 360.40 L1020.2 360.40 L1023.2 359.65 L1026.7 360.43 L1030.2 359.65 L1033.2 360.30 L1033.7 360.30 L1036.2 359.68 L1036.7 359.65 L1040.2 360.53 L1044.2 359.62 L1047.7 360.45 L1051.2 359.60 L1055.2 360.60 L1073.2 360.60 L1077.2 359.62 L1078.2 359.83 L1079.2 359.65 L1083.2 360.55 L1090.7 360.60 L1094.7 359.68 L1095.2 359.65 L1099.2 360.60 L1109.2 360.60 L1113.2 359.62 L1117.2 360.58 L1123.2 360.60 L1127.2 359.60 L1131.2 360.60 L1144.2 360.55 L1147.7 359.68 L1148.2 359.65 L1152.2 360.60 L1164.7 360.60 L1168.7 359.62 L1172.7 360.58 L1178.7 360.60 L1182.7 359.60 L1186.7 360.60 L1220.2 360.60 L1224.2 359.65 L1228.2 360.55 L1234.2 360.60 L1238.2 359.62 L1241.7 360.45 L1245.2 359.60 L1249.2 360.60 L1255.2 360.57 L1259.2 359.63 L1263.2 360.60 L1289.7 360.60 L1293.7 359.62 L1294.7 359.83" fill="none" stroke="#7fb6f7" stroke-width="2"/>
<path d="M880.2 360.7 H1294.8" fill="none" stroke="#5a8ef0" stroke-width="2.2"/>
<line x1="880.7" y1="334" x2="880.7" y2="362" stroke="#a0a0a0" stroke-width="1.2"/>
<path d="M1138.5 336.8 H1144.3000000000002 L1141.4 341 Z" fill="#35a0f0"/>
<text x="1141.6000000000001" y="333.8" font-size="8.7" fill="#333" font-weight="700" text-anchor="middle" letter-spacing="-0.05">13.76Mbps</text>
<rect x="355" y="394" width="953.2" height="182" rx="3" fill="#ffffff" stroke="#ececec" stroke-width="0.5"/>
<text x="360" y="408.6" font-size="9" fill="#262626" font-weight="700" text-anchor="start">Total Throughput</text>
<line x1="402.8" y1="430.3" x2="1295.5" y2="430.3" stroke="#f3f3f3" stroke-width="1"/>
<line x1="402.8" y1="461.8" x2="1295.5" y2="461.8" stroke="#f3f3f3" stroke-width="1"/>
<line x1="402.8" y1="493.4" x2="1295.5" y2="493.4" stroke="#f3f3f3" stroke-width="1"/>
<line x1="402.8" y1="525.0" x2="1295.5" y2="525.0" stroke="#f3f3f3" stroke-width="1"/>
<text x="399.2" y="433.5" font-size="9.2" fill="#4c4c4c" font-weight="400" text-anchor="end" letter-spacing="-0.1" stroke="#4c4c4c" stroke-width="0.2">18Mbps</text>
<text x="399.2" y="465.0" font-size="9.2" fill="#4c4c4c" font-weight="400" text-anchor="end" letter-spacing="-0.1" stroke="#4c4c4c" stroke-width="0.2">13.5Mbps</text>
<text x="399.2" y="496.59999999999997" font-size="9.2" fill="#4c4c4c" font-weight="400" text-anchor="end" letter-spacing="-0.1" stroke="#4c4c4c" stroke-width="0.2">9Mbps</text>
<text x="399.2" y="528.2" font-size="9.2" fill="#4c4c4c" font-weight="400" text-anchor="end" letter-spacing="-0.1" stroke="#4c4c4c" stroke-width="0.2">4.5Mbps</text>
<text x="399.2" y="560.0" font-size="9.2" fill="#4c4c4c" font-weight="400" text-anchor="end" letter-spacing="-0.1" stroke="#4c4c4c" stroke-width="0.2">0bps</text>
<line x1="432.9" y1="556.8" x2="432.9" y2="560.0" stroke="#a8a8a8" stroke-width="1"/>
<text x="432.9" y="567.6" font-size="8.7" fill="#4c4c4c" font-weight="400" text-anchor="middle" letter-spacing="0.1" stroke="#4c4c4c" stroke-width="0.2">13:30</text>
<line x1="507.37" y1="556.8" x2="507.37" y2="560.0" stroke="#a8a8a8" stroke-width="1"/>
<text x="507.37" y="567.6" font-size="8.7" fill="#4c4c4c" font-weight="400" text-anchor="middle" letter-spacing="0.1" stroke="#4c4c4c" stroke-width="0.2">13:35</text>
<line x1="581.8399999999999" y1="556.8" x2="581.8399999999999" y2="560.0" stroke="#a8a8a8" stroke-width="1"/>
<text x="581.8399999999999" y="567.6" font-size="8.7" fill="#4c4c4c" font-weight="400" text-anchor="middle" letter-spacing="0.1" stroke="#4c4c4c" stroke-width="0.2">13:40</text>
<line x1="656.31" y1="556.8" x2="656.31" y2="560.0" stroke="#a8a8a8" stroke-width="1"/>
<text x="656.31" y="567.6" font-size="8.7" fill="#4c4c4c" font-weight="400" text-anchor="middle" letter-spacing="0.1" stroke="#4c4c4c" stroke-width="0.2">13:45</text>
<line x1="730.78" y1="556.8" x2="730.78" y2="560.0" stroke="#a8a8a8" stroke-width="1"/>
<text x="730.78" y="567.6" font-size="8.7" fill="#4c4c4c" font-weight="400" text-anchor="middle" letter-spacing="0.1" stroke="#4c4c4c" stroke-width="0.2">13:50</text>
<line x1="805.25" y1="556.8" x2="805.25" y2="560.0" stroke="#a8a8a8" stroke-width="1"/>
<text x="805.25" y="567.6" font-size="8.7" fill="#4c4c4c" font-weight="400" text-anchor="middle" letter-spacing="0.1" stroke="#4c4c4c" stroke-width="0.2">13:55</text>
<line x1="879.72" y1="556.8" x2="879.72" y2="560.0" stroke="#a8a8a8" stroke-width="1"/>
<text x="879.72" y="567.6" font-size="8.7" fill="#4c4c4c" font-weight="400" text-anchor="middle" letter-spacing="0.1" stroke="#4c4c4c" stroke-width="0.2">14:00</text>
<line x1="954.1899999999999" y1="556.8" x2="954.1899999999999" y2="560.0" stroke="#a8a8a8" stroke-width="1"/>
<text x="954.1899999999999" y="567.6" font-size="8.7" fill="#4c4c4c" font-weight="400" text-anchor="middle" letter-spacing="0.1" stroke="#4c4c4c" stroke-width="0.2">14:05</text>
<line x1="1028.6599999999999" y1="556.8" x2="1028.6599999999999" y2="560.0" stroke="#a8a8a8" stroke-width="1"/>
<text x="1028.6599999999999" y="567.6" font-size="8.7" fill="#4c4c4c" font-weight="400" text-anchor="middle" letter-spacing="0.1" stroke="#4c4c4c" stroke-width="0.2">14:10</text>
<line x1="1103.13" y1="556.8" x2="1103.13" y2="560.0" stroke="#a8a8a8" stroke-width="1"/>
<text x="1103.13" y="567.6" font-size="8.7" fill="#4c4c4c" font-weight="400" text-anchor="middle" letter-spacing="0.1" stroke="#4c4c4c" stroke-width="0.2">14:15</text>
<line x1="1177.6" y1="556.8" x2="1177.6" y2="560.0" stroke="#a8a8a8" stroke-width="1"/>
<text x="1177.6" y="567.6" font-size="8.7" fill="#4c4c4c" font-weight="400" text-anchor="middle" letter-spacing="0.1" stroke="#4c4c4c" stroke-width="0.2">14:20</text>
<line x1="1252.07" y1="556.8" x2="1252.07" y2="560.0" stroke="#a8a8a8" stroke-width="1"/>
<text x="1252.07" y="567.6" font-size="8.7" fill="#4c4c4c" font-weight="400" text-anchor="middle" letter-spacing="0.1" stroke="#4c4c4c" stroke-width="0.2">14:25</text>
<line x1="402.8" y1="556.8" x2="1295.5" y2="556.8" stroke="#b8b8b8" stroke-width="1"/>
<line x1="402.8" y1="556.8" x2="1289.2" y2="556.8" stroke="#c9aca1" stroke-width="2"/>
<line x1="402.8" y1="558.0" x2="1295.5" y2="558.0" stroke="#c8c8c8" stroke-width="0.6"/>
<path d="M402.8 552.20 L418.8 552.20 L424.8 550.65 L425.3 550.68 L430.8 552.15 L478.3 552.20 L484.3 550.63 L490.3 552.17 L501.3 552.20 L507.3 550.60 L513.3 552.20 L523.3 552.17 L529.3 550.63 L535.3 552.64 L537.3 552.88 L553.3 552.20 L559.3 550.63 L565.3 552.17 L582.3 552.20 L588.3 550.65 L588.8 550.68 L594.3 552.15 L685.8 552.17 L691.8 550.63 L697.8 552.61 L700.3 552.90 L702.8 552.61 L708.8 550.60 L714.8 552.84 L715.3 552.90 L716.8 552.73 L722.8 550.60 L728.8 552.20 L731.8 552.20 L737.8 550.60 L743.8 552.73 L745.3 552.90 L747.8 552.61 L753.8 550.60 L759.8 552.20 L760.8 552.20 L766.8 550.63 L772.8 552.57 L775.3 552.89 L823.8 552.20 L829.8 550.60 L835.8 552.20 L841.8 552.88 L858.3 552.20 L864.3 550.65 L864.8 550.68 L870.3 552.15 L894.8 552.20 L900.8 550.65 L901.3 550.68 L906.8 552.15 L925.8 552.20 L931.8 550.65 L932.3 550.68 L937.8 552.15 L953.8 552.20 L954.1 552.30 L961.5 460.00 L969.5 552.50 L969.8 552.20 L970.8 552.12 L976.3 550.65 L976.8 550.68 L982.3 552.15 L993.3 552.24 L998.8 552.88 L1015.3 552.20 L1021.3 550.63 L1027.3 552.17 L1044.8 552.20 L1050.8 550.63 L1056.8 552.17 L1067.3 552.20 L1073.3 552.90 L1079.3 552.20 L1132.3 552.20 L1138.3 550.60 L1144.3 552.36 L1148.8 552.89 L1162.8 552.20 L1168.8 550.65 L1169.3 550.68 L1174.8 552.15 L1178.3 552.20 L1184.3 550.60 L1190.3 552.49 L1193.8 552.90 L1199.8 552.20 L1208.8 552.20 L1214.8 550.65 L1215.3 550.68 L1220.8 552.15 L1282.3 552.17 L1288.3 550.63 L1288.8 550.76" fill="none" stroke="#3d6bcf" stroke-width="1.6" stroke-linejoin="round"/>
<line x1="402.8" y1="430.3" x2="402.8" y2="557.3" stroke="#a0a0a0" stroke-width="1.1"/>
<path d="M961.5 458.2 L958.7 453.8 H964.3 Z" fill="#3b43c2"/>
<text x="961.6" y="451.5" font-size="9.2" fill="#333" font-weight="700" text-anchor="middle" letter-spacing="-0.3">13.76Mbps</text>
<rect x="355" y="582" width="953.2" height="200" rx="3" fill="#ffffff" stroke="#ececec" stroke-width="0.5"/>
<text x="360" y="596.9" font-size="9" fill="#262626" font-weight="700" text-anchor="start">Throughput (Inbound / Outbound)</text>
<line x1="402.8" y1="619.0" x2="1295.5" y2="619.0" stroke="#f3f3f3" stroke-width="1"/>
<line x1="402.8" y1="650.2" x2="1295.5" y2="650.2" stroke="#f3f3f3" stroke-width="1"/>
<line x1="402.8" y1="681.7" x2="1295.5" y2="681.7" stroke="#f3f3f3" stroke-width="1"/>
<line x1="402.8" y1="713.3" x2="1295.5" y2="713.3" stroke="#f3f3f3" stroke-width="1"/>
<text x="399.2" y="622.2" font-size="9.2" fill="#4c4c4c" font-weight="400" text-anchor="end" letter-spacing="-0.1" stroke="#4c4c4c" stroke-width="0.2">34Mbps</text>
<text x="399.2" y="653.4000000000001" font-size="9.2" fill="#4c4c4c" font-weight="400" text-anchor="end" letter-spacing="-0.1" stroke="#4c4c4c" stroke-width="0.2">25.5Mbps</text>
<text x="399.2" y="684.9000000000001" font-size="9.2" fill="#4c4c4c" font-weight="400" text-anchor="end" letter-spacing="-0.1" stroke="#4c4c4c" stroke-width="0.2">17Mbps</text>
<text x="399.2" y="716.5" font-size="9.2" fill="#4c4c4c" font-weight="400" text-anchor="end" letter-spacing="-0.1" stroke="#4c4c4c" stroke-width="0.2">8.5Mbps</text>
<text x="399.2" y="748.5" font-size="9.2" fill="#4c4c4c" font-weight="400" text-anchor="end" letter-spacing="-0.1" stroke="#4c4c4c" stroke-width="0.2">0bps</text>
<line x1="432.9" y1="745.3" x2="432.9" y2="748.5" stroke="#a8a8a8" stroke-width="1"/>
<text x="432.9" y="756.2" font-size="8.7" fill="#4c4c4c" font-weight="400" text-anchor="middle" letter-spacing="0.1" stroke="#4c4c4c" stroke-width="0.2">13:30</text>
<line x1="507.37" y1="745.3" x2="507.37" y2="748.5" stroke="#a8a8a8" stroke-width="1"/>
<text x="507.37" y="756.2" font-size="8.7" fill="#4c4c4c" font-weight="400" text-anchor="middle" letter-spacing="0.1" stroke="#4c4c4c" stroke-width="0.2">13:35</text>
<line x1="581.8399999999999" y1="745.3" x2="581.8399999999999" y2="748.5" stroke="#a8a8a8" stroke-width="1"/>
<text x="581.8399999999999" y="756.2" font-size="8.7" fill="#4c4c4c" font-weight="400" text-anchor="middle" letter-spacing="0.1" stroke="#4c4c4c" stroke-width="0.2">13:40</text>
<line x1="656.31" y1="745.3" x2="656.31" y2="748.5" stroke="#a8a8a8" stroke-width="1"/>
<text x="656.31" y="756.2" font-size="8.7" fill="#4c4c4c" font-weight="400" text-anchor="middle" letter-spacing="0.1" stroke="#4c4c4c" stroke-width="0.2">13:45</text>
<line x1="730.78" y1="745.3" x2="730.78" y2="748.5" stroke="#a8a8a8" stroke-width="1"/>
<text x="730.78" y="756.2" font-size="8.7" fill="#4c4c4c" font-weight="400" text-anchor="middle" letter-spacing="0.1" stroke="#4c4c4c" stroke-width="0.2">13:50</text>
<line x1="805.25" y1="745.3" x2="805.25" y2="748.5" stroke="#a8a8a8" stroke-width="1"/>
<text x="805.25" y="756.2" font-size="8.7" fill="#4c4c4c" font-weight="400" text-anchor="middle" letter-spacing="0.1" stroke="#4c4c4c" stroke-width="0.2">13:55</text>
<line x1="879.72" y1="745.3" x2="879.72" y2="748.5" stroke="#a8a8a8" stroke-width="1"/>
<text x="879.72" y="756.2" font-size="8.7" fill="#4c4c4c" font-weight="400" text-anchor="middle" letter-spacing="0.1" stroke="#4c4c4c" stroke-width="0.2">14:00</text>
<line x1="954.1899999999999" y1="745.3" x2="954.1899999999999" y2="748.5" stroke="#a8a8a8" stroke-width="1"/>
<text x="954.1899999999999" y="756.2" font-size="8.7" fill="#4c4c4c" font-weight="400" text-anchor="middle" letter-spacing="0.1" stroke="#4c4c4c" stroke-width="0.2">14:05</text>
<line x1="1028.6599999999999" y1="745.3" x2="1028.6599999999999" y2="748.5" stroke="#a8a8a8" stroke-width="1"/>
<text x="1028.6599999999999" y="756.2" font-size="8.7" fill="#4c4c4c" font-weight="400" text-anchor="middle" letter-spacing="0.1" stroke="#4c4c4c" stroke-width="0.2">14:10</text>
<line x1="1103.13" y1="745.3" x2="1103.13" y2="748.5" stroke="#a8a8a8" stroke-width="1"/>
<text x="1103.13" y="756.2" font-size="8.7" fill="#4c4c4c" font-weight="400" text-anchor="middle" letter-spacing="0.1" stroke="#4c4c4c" stroke-width="0.2">14:15</text>
<line x1="1177.6" y1="745.3" x2="1177.6" y2="748.5" stroke="#a8a8a8" stroke-width="1"/>
<text x="1177.6" y="756.2" font-size="8.7" fill="#4c4c4c" font-weight="400" text-anchor="middle" letter-spacing="0.1" stroke="#4c4c4c" stroke-width="0.2">14:20</text>
<line x1="1252.07" y1="745.3" x2="1252.07" y2="748.5" stroke="#a8a8a8" stroke-width="1"/>
<text x="1252.07" y="756.2" font-size="8.7" fill="#4c4c4c" font-weight="400" text-anchor="middle" letter-spacing="0.1" stroke="#4c4c4c" stroke-width="0.2">14:25</text>
<path d="M402.8 739.70 L418.8 739.70 L424.8 738.44 L430.8 739.66 L478.3 739.70 L484.3 738.42 L490.3 739.68 L501.3 739.70 L507.3 738.40 L513.3 739.70 L523.3 739.68 L529.3 738.42 L535.3 740.02 L537.8 740.18 L553.3 739.70 L559.3 738.42 L565.3 739.68 L582.3 739.70 L588.3 738.44 L594.3 739.66 L685.8 739.68 L691.8 738.42 L697.8 739.99 L700.3 740.20 L702.8 739.99 L708.8 738.40 L714.8 740.16 L716.8 740.08 L722.8 738.40 L728.8 739.70 L731.8 739.70 L737.8 738.40 L743.8 740.08 L745.3 740.20 L747.8 739.99 L753.8 738.40 L759.8 739.70 L760.8 739.70 L766.8 738.42 L772.8 739.96 L775.3 740.19 L823.8 739.70 L829.8 738.40 L835.8 739.70 L842.3 740.18 L858.8 739.64 L864.3 738.44 L870.3 739.66 L894.8 739.70 L900.8 738.44 L906.8 739.66 L925.8 739.70 L931.8 738.44 L937.8 739.66 L953.8 739.70 L954.1 739.80 L961.5 643.20 L969.5 739.80 L969.8 739.70 L970.8 739.64 L976.3 738.44 L982.3 739.66 L999.3 740.18 L1015.3 739.70 L1021.3 738.42 L1027.3 739.68 L1044.8 739.70 L1050.8 738.42 L1056.8 739.68 L1073.3 740.20 L1132.3 739.70 L1138.3 738.40 L1144.3 739.82 L1148.8 740.19 L1163.3 739.64 L1168.8 738.44 L1174.8 739.66 L1178.3 739.70 L1184.3 738.40 L1190.3 739.91 L1193.8 740.20 L1209.3 739.64 L1214.8 738.44 L1220.8 739.66 L1282.3 739.68 L1288.3 738.42 L1288.8 738.53 L1288.8 741.97 L1220.8 742.58 L1214.8 741.92 L1208.8 742.60 L1190.3 742.60 L1184.3 741.90 L1178.3 742.60 L1168.8 741.92 L1162.8 742.60 L1144.3 742.60 L1138.3 741.90 L1132.3 742.60 L1056.8 742.59 L1050.8 741.91 L1044.8 742.60 L1027.3 742.59 L1021.3 741.91 L1015.3 742.60 L982.3 742.58 L976.3 741.92 L970.3 742.60 L969.5 742.60 L961.5 691.60 L954.1 742.60 L937.8 742.58 L931.8 741.92 L925.8 742.60 L906.8 742.58 L900.8 741.92 L894.8 742.60 L870.3 742.58 L864.3 741.92 L858.3 742.60 L835.8 742.60 L829.8 741.90 L823.8 742.60 L772.8 742.59 L766.8 741.91 L760.8 742.60 L753.8 741.90 L747.8 742.60 L743.8 742.60 L737.8 741.90 L731.8 742.60 L722.8 741.90 L716.8 742.60 L708.8 741.90 L702.8 742.60 L691.8 741.91 L594.3 742.58 L588.3 741.92 L582.3 742.60 L565.3 742.59 L559.3 741.91 L553.3 742.60 L534.8 742.55 L529.3 741.91 L513.3 742.60 L507.3 741.90 L501.3 742.60 L490.3 742.59 L484.3 741.91 L478.3 742.60 L430.8 742.58 L424.8 741.92 L418.8 742.60 L402.8 742.60 Z" fill="#a8dbfb"/>
<path d="M402.8 742.60 L419.3 742.57 L424.8 741.92 L478.3 742.60 L484.3 741.91 L501.3 742.60 L507.3 741.90 L513.3 742.60 L523.3 742.59 L529.3 741.91 L535.3 742.60 L553.8 742.55 L559.3 741.91 L582.8 742.57 L588.3 741.92 L685.8 742.59 L691.8 741.91 L697.8 742.60 L702.8 742.60 L708.8 741.90 L714.8 742.60 L722.8 741.90 L728.8 742.60 L737.8 741.90 L743.8 742.60 L747.8 742.60 L753.8 741.90 L759.8 742.60 L766.8 741.91 L823.8 742.60 L829.8 741.90 L835.8 742.60 L858.8 742.57 L864.3 741.92 L895.3 742.57 L900.8 741.92 L926.3 742.57 L931.8 741.92 L954.1 742.60 L961.5 691.60 L969.5 742.60 L976.3 741.92 L1015.3 742.60 L1021.3 741.91 L1044.8 742.60 L1050.8 741.91 L1132.3 742.60 L1138.3 741.90 L1144.3 742.60 L1163.3 742.57 L1168.8 741.92 L1178.3 742.60 L1184.3 741.90 L1190.3 742.60 L1209.3 742.57 L1214.8 741.92 L1282.3 742.59 L1288.3 741.91 L1288.8 741.97 L1288.80 745.3 L402.80 745.3 Z" fill="#d4b8f8"/>
<path d="M402.8 739.70 L418.8 739.70 L424.8 738.44 L430.8 739.66 L478.3 739.70 L484.3 738.42 L490.3 739.68 L501.3 739.70 L507.3 738.40 L513.3 739.70 L523.3 739.68 L529.3 738.42 L535.3 740.02 L537.8 740.18 L553.3 739.70 L559.3 738.42 L565.3 739.68 L582.3 739.70 L588.3 738.44 L594.3 739.66 L685.8 739.68 L691.8 738.42 L697.8 739.99 L700.3 740.20 L702.8 739.99 L708.8 738.40 L714.8 740.16 L716.8 740.08 L722.8 738.40 L728.8 739.70 L731.8 739.70 L737.8 738.40 L743.8 740.08 L745.3 740.20 L747.8 739.99 L753.8 738.40 L759.8 739.70 L760.8 739.70 L766.8 738.42 L772.8 739.96 L775.3 740.19 L823.8 739.70 L829.8 738.40 L835.8 739.70 L842.3 740.18 L858.8 739.64 L864.3 738.44 L870.3 739.66 L894.8 739.70 L900.8 738.44 L906.8 739.66 L925.8 739.70 L931.8 738.44 L937.8 739.66 L953.8 739.70 L954.1 739.80 L961.5 643.20 L969.5 739.80 L969.8 739.70 L970.8 739.64 L976.3 738.44 L982.3 739.66 L999.3 740.18 L1015.3 739.70 L1021.3 738.42 L1027.3 739.68 L1044.8 739.70 L1050.8 738.42 L1056.8 739.68 L1073.3 740.20 L1132.3 739.70 L1138.3 738.40 L1144.3 739.82 L1148.8 740.19 L1163.3 739.64 L1168.8 738.44 L1174.8 739.66 L1178.3 739.70 L1184.3 738.40 L1190.3 739.91 L1193.8 740.20 L1209.3 739.64 L1214.8 738.44 L1220.8 739.66 L1282.3 739.68 L1288.3 738.42 L1288.8 738.53" fill="none" stroke="#37a3f3" stroke-width="1.4" stroke-linejoin="round"/>
<path d="M402.8 742.60 L419.3 742.57 L424.8 741.92 L478.3 742.60 L484.3 741.91 L501.3 742.60 L507.3 741.90 L513.3 742.60 L523.3 742.59 L529.3 741.91 L535.3 742.60 L553.8 742.55 L559.3 741.91 L582.8 742.57 L588.3 741.92 L685.8 742.59 L691.8 741.91 L697.8 742.60 L702.8 742.60 L708.8 741.90 L714.8 742.60 L722.8 741.90 L728.8 742.60 L737.8 741.90 L743.8 742.60 L747.8 742.60 L753.8 741.90 L759.8 742.60 L766.8 741.91 L823.8 742.60 L829.8 741.90 L835.8 742.60 L858.8 742.57 L864.3 741.92 L895.3 742.57 L900.8 741.92 L926.3 742.57 L931.8 741.92 L954.1 742.60 L961.5 691.60 L969.5 742.60 L976.3 741.92 L1015.3 742.60 L1021.3 741.91 L1044.8 742.60 L1050.8 741.91 L1132.3 742.60 L1138.3 741.90 L1144.3 742.60 L1163.3 742.57 L1168.8 741.92 L1178.3 742.60 L1184.3 741.90 L1190.3 742.60 L1209.3 742.57 L1214.8 741.92 L1282.3 742.59 L1288.3 741.91 L1288.8 741.97" fill="none" stroke="#8b57e8" stroke-width="1.4" stroke-linejoin="round"/>
<line x1="402.8" y1="745.3" x2="1295.5" y2="745.3" stroke="#b0b0b0" stroke-width="1"/>
<line x1="402.8" y1="619.0" x2="402.8" y2="745.8" stroke="#a0a0a0" stroke-width="1.1"/>
<path d="M961.5 640.6 L958.7 636.0 H964.3 Z" fill="#37a3f5"/>
<text x="961.6" y="633.6" font-size="9.2" fill="#333" font-weight="700" text-anchor="middle" letter-spacing="-0.3">27.52Mbps</text>
</svg>
</body></html>
